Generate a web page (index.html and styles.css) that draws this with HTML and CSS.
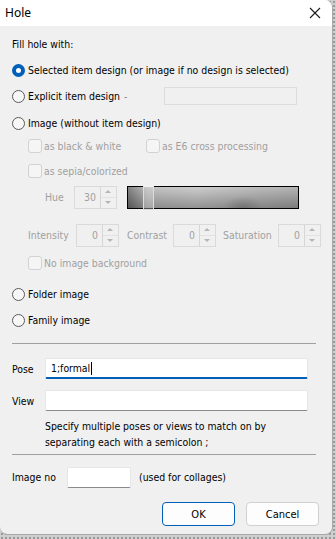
FILE: index.html
```html
<!DOCTYPE html>
<html lang="en">
<head>
    <meta charset="UTF-8">
    <meta name="viewport" content="width=device-width, initial-scale=1.0">
    <title>Hole</title>
    <link rel="stylesheet" href="styles.css">
</head>
<body>
    <div class="dialog">
        <div class="titlebar">
            <span class="title">Hole</span>
            <svg class="close" width="12" height="12" viewBox="0 0 12 12">
                <path d="M1 1 L11 11 M11 1 L1 11" stroke="#1a1a1a" stroke-width="1.1"/>
            </svg>
        </div>

        <div class="content">
            <div class="row r-fill">Fill hole with:</div>

            <div class="row r-sel">
                <span class="radio checked"></span>
                <span>Selected item design (or image if no design is selected)</span>
            </div>

            <div class="row r-expl">
                <span class="radio"></span>
                <span class="lbl-expl">Explicit item design</span>
                <span class="dash">-</span>
                <span class="box-disabled"></span>
            </div>

            <div class="row r-img">
                <span class="radio"></span>
                <span>Image (without item design)</span>
            </div>

            <div class="row r-cb1 disabled indent">
                <span class="check"></span>
                <span class="cb-bw">as black &amp; white</span>
                <span class="check"></span>
                <span>as E6 cross processing</span>
            </div>

            <div class="row r-cb2 disabled indent">
                <span class="check"></span>
                <span>as sepia/colorized</span>
            </div>

            <div class="row r-hue disabled">
                <span class="lbl-hue">Hue</span>
                <div class="spin">
                    <span class="spin-val">30</span>
                    <span class="spin-btns"><i class="up"></i><i class="down"></i></span>
                </div>
                <div class="slider"><span class="thumb"></span></div>
            </div>

            <div class="row r-int disabled indent">
                <span class="lbl-int">Intensity</span>
                <div class="spin">
                    <span class="spin-val">0</span>
                    <span class="spin-btns"><i class="up"></i><i class="down"></i></span>
                </div>
                <span class="lbl-con">Contrast</span>
                <div class="spin">
                    <span class="spin-val">0</span>
                    <span class="spin-btns"><i class="up"></i><i class="down"></i></span>
                </div>
                <span class="lbl-sat">Saturation</span>
                <div class="spin">
                    <span class="spin-val">0</span>
                    <span class="spin-btns"><i class="up"></i><i class="down"></i></span>
                </div>
            </div>

            <div class="row r-nobg disabled indent">
                <span class="check"></span>
                <span>No image background</span>
            </div>

            <div class="row r-folder">
                <span class="radio"></span>
                <span>Folder image</span>
            </div>

            <div class="row r-family">
                <span class="radio"></span>
                <span>Family image</span>
            </div>

            <div class="sep s1"></div>

            <div class="row r-pose">
                <span class="lbl-field">Pose</span>
                <div class="field focused">1;formal<span class="caret"></span></div>
            </div>

            <div class="row r-view">
                <span class="lbl-field">View</span>
                <div class="field"></div>
            </div>

            <p class="help">Specify multiple poses or views to match on by separating each with a semicolon ;</p>

            <div class="sep s2"></div>

            <div class="row r-imgno">
                <span class="lbl-imgno">Image no</span>
                <div class="field small"></div>
                <span>(used for collages)</span>
            </div>

            <div class="buttons">
                <button class="btn default">OK</button>
                <button class="btn">Cancel</button>
            </div>
        </div>
    </div>
</body>
</html>
```

FILE: styles.css
```css
html, body {
    margin: 0;
    padding: 0;
}
body {
    width: 336px;
    height: 539px;
    background-color: #cfcfcf;
    background-image: radial-gradient(#9a9a9a 0.8px, transparent 1px);
    background-size: 4px 4px;
    font-family: "DejaVu Sans Condensed", "DejaVu Sans", sans-serif;
    font-size: 10.4px;
    color: #000;
    overflow: hidden;
}
.dialog {
    width: 333px;
    height: 535px;
    background: #f0f0f0;
    border-right: 1px solid #a8a8a8;
    border-bottom: 1px solid #a8a8a8;
    border-radius: 0 8px 8px 8px;
    overflow: hidden;
    box-sizing: border-box;
}
.titlebar {
    height: 26px;
    background: #fff;
    display: flex;
    align-items: center;
    justify-content: space-between;
    padding: 0 10px 0 5px;
}
.title {
    font-family: "Noto Sans", sans-serif;
    font-size: 12px;
    margin-top: -1px;
}
.close {
    margin-right: 1px;
}
.content {
    padding: 0 0 0 12px;
    display: flex;
    flex-direction: column;
}
.row {
    display: flex;
    align-items: center;
    height: 20px;
    white-space: nowrap;
}
.indent {
    padding-left: 16px;
}
.disabled {
    color: #a0a0a0;
}

/* vertical rhythm */
.r-fill { margin-top: 8px; }
.r-sel { margin-top: 6px; }
.r-expl { margin-top: 6px; }
.r-img { margin-top: 7px; }
.r-cb1 { margin-top: 3px; }
.r-cb2 { margin-top: 5px; }
.r-hue { margin-top: 4px; height: 24px; }
.r-int { margin-top: 14px; height: 24px; }
.r-nobg { margin-top: 6px; }
.r-folder { margin-top: 11px; }
.r-family { margin-top: 6px; }
.s1 { margin-top: 13px; }
.r-pose { margin-top: 14px; height: 21px; }
.r-view { margin-top: 11px; height: 21px; }
.s2 { margin-top: 4px; }
.r-imgno { margin-top: 12px; }

.radio {
    width: 11px;
    height: 11px;
    border: 1px solid #5a5a5a;
    border-radius: 50%;
    margin-right: 3px;
    background: #f7f7f7;
    flex: none;
}
.radio.checked {
    border: 4px solid #005fb8;
    width: 5px;
    height: 5px;
    background: #fff;
}
.lbl-expl {
    width: 96px;
}
.dash {
    color: #888;
    width: 40px;
}
.box-disabled {
    width: 133px;
    height: 18px;
    border: 1px solid #dcdcdc;
    box-sizing: border-box;
}
.check {
    width: 12px;
    height: 12px;
    border: 1px solid #d2d2d2;
    border-radius: 3px;
    background: #f5f5f5;
    margin-right: 2px;
    flex: none;
}
.cb-bw {
    width: 102px;
}
.lbl-hue {
    margin-left: 33px;
    width: 29px;
}
.spin {
    display: flex;
    height: 23px;
    box-sizing: border-box;
    border: 1px solid #dadada;
    width: 43px;
    flex: none;
}
.spin-val {
    flex: 1;
    text-align: right;
    padding-right: 4px;
    line-height: 21px;
}
.spin-btns {
    width: 15px;
    border-left: 1px solid #d6d6d6;
    display: flex;
    flex-direction: column;
}
.spin-btns i {
    flex: 1;
    position: relative;
}
.spin-btns i.up {
    border-bottom: 1px solid #e2e2e2;
}
.spin-btns i::after {
    content: "";
    position: absolute;
    left: 4px;
    top: 3px;
    border-left: 3px solid transparent;
    border-right: 3px solid transparent;
}
.spin-btns i.up::after {
    border-bottom: 3px solid #b5b5b5;
}
.spin-btns i.down::after {
    border-top: 3px solid #b5b5b5;
}
.slider {
    margin-left: 10px;
    width: 172px;
    height: 23px;
    box-sizing: border-box;
    border: 1px solid #000;
    position: relative;
    background:
        radial-gradient(ellipse 20px 12px at 115px 100%, rgba(70,70,70,0.35), transparent),
        linear-gradient(to bottom, rgba(255,255,255,0.15), rgba(0,0,0,0.25)),
        linear-gradient(to right, #707070 0%, #b8b8b8 12%, #c4c4c4 40%, #b4b4b4 70%, #a6a6a6 100%);
}
.thumb {
    position: absolute;
    left: 15px;
    top: -1px;
    width: 9px;
    height: 22px;
    border: 1px solid #dcdcdc;
    border-top-color: #f4f4f4;
    background: rgba(220,220,220,0.35);
}
.lbl-int { width: 48px; }
.lbl-con { width: 54px; padding-left: 8px; box-sizing: border-box; }
.lbl-sat { width: 62px; padding-left: 7px; box-sizing: border-box; }

.sep {
    width: 304px;
    height: 1px;
    background: #a0a0a0;
}
.lbl-field {
    width: 33px;
}
.field {
    width: 263px;
    height: 21px;
    box-sizing: border-box;
    background: #fff;
    border: 1px solid #e6e6e6;
    border-bottom: 1px solid #8a8a8a;
    border-radius: 2px;
    padding-left: 5px;
    line-height: 18px;
    display: flex;
    align-items: center;
}
.field.focused {
    border-bottom: 2px solid #005fb8;
}
.caret {
    width: 1px;
    height: 13px;
    background: #000;
    margin-left: 1px;
}
.help {
    margin: 7px 0 0 33px;
    width: 260px;
    line-height: 16px;
}
.lbl-imgno {
    width: 55px;
}
.field.small {
    width: 64px;
    margin-right: 8px;
}
.buttons {
    display: flex;
    justify-content: flex-end;
    gap: 11px;
    margin-top: 15px;
    padding-right: 13px;
}
.btn {
    width: 73px;
    height: 24px;
    font-family: inherit;
    font-size: 11px;
    background: #fdfdfd;
    border: 1px solid #d0d0d0;
    border-radius: 4px;
    padding: 0;
}
.btn.default {
    border: 1px solid #005fb8;
}
```
